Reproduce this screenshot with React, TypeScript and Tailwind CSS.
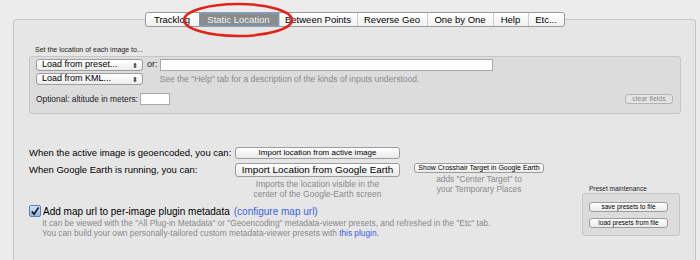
import React from "react";

const tabs = [
    { label: "Tracklog", w: "w-[53px]" },
    { label: "Static Location", w: "w-[80px]" },
    { label: "Between Points", w: "w-[78px]" },
    { label: "Reverse Geo", w: "w-[70px]" },
    { label: "One by One", w: "w-[66px]" },
    { label: "Help", w: "w-[35px]" },
    { label: "Etc...", w: "w-[36px]" },
];

function MacButton({ children, className = "" }: { children: React.ReactNode; className?: string }) {
    return (
        <div className={`flex items-center justify-center rounded-[3px] border border-[#9c9c9c] bg-linear-to-b from-white to-[#eaeaea] text-black whitespace-nowrap ${className}`}>
            {children}
        </div>
    );
}

function PopUp({ label }: { label: string }) {
    return (
        <div className="flex items-center justify-between w-[107px] h-[12px] rounded-[3px] border border-[#9c9c9c] bg-linear-to-b from-white to-[#ececec] pl-[5px] pr-[4px] text-[9px] text-black">
            <span>{label}</span>
            <span className="text-[7px] leading-[7px] text-[#444]">⬍</span>
        </div>
    );
}

export default function App() {
    return (
        <div className="relative w-[700px] h-[260px] overflow-hidden bg-[#ececec] font-['Liberation_Sans',Arial,sans-serif]">
            <div className="ml-[13px] mt-[19px] w-[683px] h-[241px] border-l border-t border-r border-[#c4c4c4] rounded-t-[4px] bg-[#e6e6e6] flex flex-col">
                {/* tab strip */}
                <div className="-mt-[8px] h-[15px] flex justify-center">
                    <div className="flex h-[15px] rounded-[3px] border border-[#9a9a9a] bg-linear-to-b from-white to-[#f1f1f1] overflow-hidden">
                        {tabs.map((t, i) => (
                            <div
                                key={t.label}
                                className={`${t.w} flex items-center justify-center text-[9.5px] leading-none whitespace-nowrap ${
                                    i === 1
                                        ? "bg-[#8b8b8b] text-[#f2f2f2] border border-[#6d9fd6]"
                                        : i > 0
                                        ? "border-l border-[#cfcfcf] text-black"
                                        : "text-black"
                                }`}
                            >
                                {t.label}
                            </div>
                        ))}
                    </div>
                </div>

                <div className="ml-[21px] mt-[18px] text-[7px] leading-[10px] text-[#222]">Set the location of each image to...</div>

                {/* location group */}
                <div className="ml-[15px] mt-[1px] w-[652px] h-[58px] rounded-[3px] border border-[#c6c6c6] bg-[#dcdcdc] pl-[6px] pt-[2px] pr-[7px] flex flex-col">
                    <div className="flex">
                        <div className="flex flex-col gap-[2px]">
                            <PopUp label="Load from preset..." />
                            <PopUp label="Load from KML..." />
                        </div>
                        <div className="ml-[4px] h-[12px] flex items-center text-[9px] text-[#222]">or:</div>
                        <div className="ml-[2px] flex flex-col gap-[2px]">
                            <div className="w-[333px] h-[12px] border border-[#a8a8a8] bg-white"></div>
                            <div className="h-[12px] flex items-center text-[8.5px] text-[#8a8a8a]">See the "Help" tab for a description of the kinds of inputs understood.</div>
                        </div>
                    </div>
                    <div className="mt-[8px] flex items-center justify-between">
                        <div className="flex items-center text-[8.4px] text-[#222]">
                            <span>Optional: altitude in meters:</span>
                            <div className="ml-[2px] w-[30px] h-[12px] border border-[#a8a8a8] bg-white"></div>
                        </div>
                        <div className="w-[48px] h-[10px] flex items-center justify-center rounded-[3px] border border-[#b4b4b4] bg-[#e4e4e4] text-[7px] text-[#8a8a8a]">clear fields</div>
                    </div>
                </div>

                {/* lower area */}
                <div className="ml-[15px] flex">
                    <div className="w-[553px] flex flex-col">
                        <div className="mt-[33px] flex items-center h-[12px]">
                            <div className="w-[206px] text-[9.5px] text-black whitespace-nowrap">When the active image is geoencoded, you can:</div>
                            <MacButton className="w-[165px] h-[12px] text-[8px]">Import location from active image</MacButton>
                        </div>
                        <div className="mt-[4px] flex items-start">
                            <div className="w-[206px] h-[14px] flex items-center text-[9.5px] text-black whitespace-nowrap">When Google Earth is running, you can:</div>
                            <div className="w-[165px] flex flex-col items-center">
                                <MacButton className="w-[165px] h-[14px] text-[9.9px]">Import Location from Google Earth</MacButton>
                                <div className="mt-[2px] text-center text-[8.5px] leading-[10px] text-[#8a8a8a]">
                                    Imports the location visible in the
                                    <br />
                                    center of the Google-Earth screen
                                </div>
                            </div>
                            <div className="ml-[14px] w-[130px] flex flex-col items-center">
                                <MacButton className="w-[130px] h-[10px] text-[7px]">Show Crosshair Target in Google Earth</MacButton>
                                <div className="mt-[1px] text-center text-[8.3px] leading-[10px] text-[#8a8a8a]">
                                    adds "Center Target" to
                                    <br />
                                    your Temporary Places
                                </div>
                            </div>
                        </div>
                        <div className="mt-[6px] flex items-center h-[12px]">
                            <div className="w-[12px] h-[12px] rounded-[2px] border border-[#5a7fb8] bg-linear-to-b from-[#d5e6fa] to-[#8db4e8] flex items-center justify-center">
                                <svg width="11" height="11" viewBox="0 0 11 11">
                                    <path d="M2 5.5 L4.5 8.5 L9.5 1" fill="none" stroke="#111" strokeWidth="1.8" />
                                </svg>
                            </div>
                            <span className="ml-[2px] text-[10px] text-black whitespace-nowrap">Add map url to per-image plugin metadata</span>
                            <span className="ml-[4px] text-[10px] text-[#3d5fe0] whitespace-nowrap">(configure map url)</span>
                        </div>
                        <div className="pl-[13px] mt-[1px] text-[8.3px] leading-[10px] text-[#8a8a8a] whitespace-nowrap">
                            It can be viewed with the "All Plug-in Metadata" or "Geoencoding" metadata-viewer presets, and refreshed in the "Etc" tab.
                            <br />
                            You can build your own personally-tailored custom metadata-viewer presets with <span className="text-[#3d5fe0]">this plugin.</span>
                        </div>
                    </div>

                    <div className="mt-[70px] w-[98px] flex flex-col">
                        <div className="pl-[7px] text-[6.5px] leading-[9px] text-[#222]">Preset maintenance</div>
                        <div className="h-[43px] rounded-[3px] border border-[#c6c6c6] bg-[#dcdcdc] pt-[8px] pl-[6px] flex flex-col gap-[6px]">
                            <MacButton className="w-[79px] h-[10px] text-[6.5px]">save presets to file</MacButton>
                            <MacButton className="w-[79px] h-[10px] text-[6.5px]">load presets from file</MacButton>
                        </div>
                    </div>
                </div>
            </div>

            {/* red annotation ellipse */}
            <svg className="absolute left-[181px] top-[1px]" width="114" height="38" viewBox="0 0 114 38">
                <ellipse cx="57" cy="19" rx="54" ry="16" fill="none" stroke="#e3231b" strokeWidth="2.5" />
            </svg>
        </div>
    );
}
